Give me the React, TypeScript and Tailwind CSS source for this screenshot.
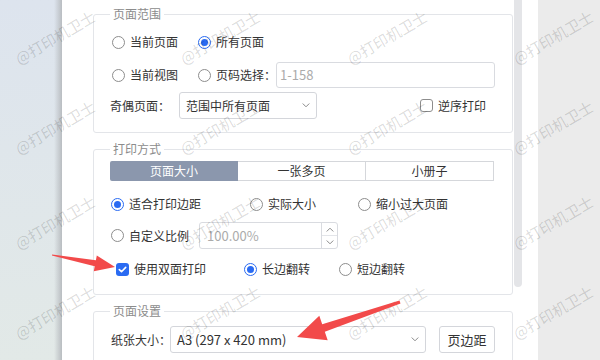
import type { ReactNode } from 'react';

function Radio({ checked, label }: { checked?: boolean; label: string }) {
  return (
    <span className="flex items-center gap-[5px] whitespace-nowrap">
      <span
        className={`flex h-[13px] w-[13px] shrink-0 items-center justify-center rounded-full border bg-white ${
          checked ? 'border-[#2a6bf2]' : 'border-[#8d8d8d]'
        }`}
      >
        {checked && <span className="h-[7px] w-[7px] rounded-full bg-[#2a6bf2]" />}
      </span>
      <span>{label}</span>
    </span>
  );
}

function Checkbox({ checked, label }: { checked?: boolean; label: string }) {
  return (
    <span className="flex items-center gap-[5px] whitespace-nowrap">
      {checked ? (
        <span className="flex h-[13px] w-[13px] shrink-0 items-center justify-center rounded-[3px] bg-[#2a6bf2]">
          <svg width="11" height="11" viewBox="0 0 11 11" fill="none">
            <path d="M2.3 5.6l2.2 2.1 4.2-4.3" stroke="#fff" strokeWidth="1.6" strokeLinecap="round" strokeLinejoin="round" />
          </svg>
        </span>
      ) : (
        <span className="h-[13px] w-[13px] shrink-0 rounded-[3px] border border-[#8d8d8d] bg-white" />
      )}
      <span>{label}</span>
    </span>
  );
}

function Chevron({ up }: { up?: boolean }) {
  return (
    <svg width="8" height="5" viewBox="0 0 8 5" fill="none">
      <path d={up ? 'M1 4.2L4 1.2l3 3' : 'M1 0.8l3 3 3-3'} stroke="#8a8a8a" strokeWidth="1" strokeLinecap="round" strokeLinejoin="round" />
    </svg>
  );
}

function Group({ title, children, last }: { title: string; children: ReactNode; last?: boolean }) {
  return (
    <fieldset
      className={`rounded-[3px] border border-[#e3e5e9] pl-[16px] pr-[17px] ${last ? 'pb-[30px]' : 'pb-[13px]'}`}
    >
      <legend className="px-[3px] text-[12px] leading-[16px] text-[#8c8c8c]">{title}</legend>
      {children}
    </fieldset>
  );
}

// watermark grid: "@打印机卫士"
const wmCols = [55, 220, 387, 553];
const wmRows = [37, 127, 222, 312];

export default function App() {
  return (
    <div className="relative flex h-[360px] w-[600px] overflow-hidden bg-white font-['Noto_Sans_CJK_SC','Noto_Sans',sans-serif] text-[12px] text-[#333]">
      {/* left backdrop */}
      <div className="flex h-full w-[62px] justify-end bg-linear-to-b from-[#dde4ee] to-[#e2e9e7]">
        <div className="h-full w-[8px] bg-linear-to-r from-transparent to-[#b9bdc1]" />
      </div>

      {/* dialog panel */}
      <div className="flex h-full w-[476px] bg-white pl-[31px]">
        <div className="flex w-[420px] flex-col gap-[8px] pt-[6px]">
          <Group title="页面范围">
            <div className="flex flex-col pt-[8px]">
              <div className="flex h-[24px] items-center">
                <div className="w-[86px] pl-[2px]">
                  <Radio label="当前页面" />
                </div>
                <div className="pl-[2px]">
                  <Radio checked label="所有页面" />
                </div>
              </div>
              <div className="mt-[8px] flex h-[26px] items-center">
                <div className="w-[86px] pl-[2px]">
                  <Radio label="当前视图" />
                </div>
                <div className="pl-[2px]">
                  <Radio label="页码选择：" />
                </div>
                <div className="flex h-full flex-1 items-center rounded-[3px] border border-[#d9dbe0] pl-[3px] text-[13px] text-[#ababab]">
                  1-158
                </div>
              </div>
              <div className="mt-[4px] flex h-[27px] items-center">
                <span className="w-[69px] shrink-0 whitespace-nowrap">奇偶页面：</span>
                <div className="flex h-full w-[138px] items-center justify-between rounded-[3px] border border-[#d4d6db] px-[6px]">
                  <span>范围中所有页面</span>
                  <Chevron />
                </div>
                <div className="ml-[103px]">
                  <Checkbox label="逆序打印" />
                </div>
              </div>
            </div>
          </Group>

          <Group title="打印方式">
            <div className="flex flex-col">
              <div className="mt-[4px] flex h-[20px] overflow-hidden rounded-[2px]">
                <div className="flex w-[128px] items-center justify-center bg-[#8b97ad] text-white">页面大小</div>
                <div className="flex w-[128px] items-center justify-center border-y border-r border-[#d5d7db]">一张多页</div>
                <div className="flex w-[128px] items-center justify-center border-y border-r border-[#d5d7db]">小册子</div>
              </div>
              <div className="mt-[11px] flex h-[24px] items-center">
                <div className="w-[140px] pl-[1px]">
                  <Radio checked label="适合打印边距" />
                </div>
                <div className="w-[108px]">
                  <Radio label="实际大小" />
                </div>
                <Radio label="缩小过大页面" />
              </div>
              <div className="mt-[6px] flex h-[27px] items-center">
                <div className="w-[89px] shrink-0 pl-[1px]">
                  <Radio label="自定义比例" />
                </div>
                <div className="flex h-full w-[139px] rounded-[3px] border border-[#d9dbe0]">
                  <div className="flex flex-1 items-center pl-[7px] text-[13px] text-[#ababab]">100.00%</div>
                  <div className="flex w-[16px] flex-col border-l border-[#d9dbe0]">
                    <div className="flex flex-1 items-center justify-center border-b border-[#e3e5e9]">
                      <Chevron up />
                    </div>
                    <div className="flex flex-1 items-center justify-center">
                      <Chevron />
                    </div>
                  </div>
                </div>
              </div>
              <div className="mt-[8px] flex h-[24px] items-center">
                <div className="w-[134px] pl-[6px]">
                  <Checkbox checked label="使用双面打印" />
                </div>
                <div className="w-[95px]">
                  <Radio checked label="长边翻转" />
                </div>
                <Radio label="短边翻转" />
              </div>
            </div>
          </Group>

          <Group title="页面设置" last>
            <div className="mt-[7px] flex h-[27px] items-center">
              <span className="w-[60px] shrink-0 whitespace-nowrap pl-[1px]">纸张大小：</span>
              <div className="flex h-full w-[256px] items-center justify-between rounded-[3px] border border-[#d4d6db] px-[6px]">
                <span className="text-[13px]">A3 (297 x 420 mm)</span>
                <Chevron />
              </div>
              <div className="ml-[13px] flex h-full w-[56px] items-center justify-center rounded-[3px] border border-[#d4d6db] text-[13px]">
                页边距
              </div>
            </div>
          </Group>
        </div>

        {/* scrollbar thumb */}
        <div className="ml-[1px] h-[287px] w-[8px] rounded-b-full bg-[#e4e5e8]" />
      </div>

      {/* right backdrop */}
      <div className="h-full flex-1 bg-[#ebebeb]" />

      {/* watermarks */}
      <div className="pointer-events-none absolute inset-0">
        {wmRows.map((y) =>
          wmCols.map((x) => (
            <span
              key={`${x}-${y}`}
              className="absolute -translate-x-1/2 -translate-y-1/2 -rotate-30 whitespace-nowrap text-[15px] leading-none text-black/15"
              style={{ left: x, top: y }}
            >
              @打印机卫士
            </span>
          ))
        )}
      </div>

      {/* annotation arrows */}
      <svg className="pointer-events-none absolute inset-0" width="600" height="360" viewBox="0 0 600 360">
        <polygon
          points="52.1,254.4 95.9,260.3 96.8,255.4 115,267 93.8,271.2 94.7,266.3 51.9,255.6"
          fill="#f24a4a"
        />
        <polygon
          points="400.5,303.6 324.8,331.8 327.7,340.3 297,337 319.3,315.7 322.2,324.2 399.5,300.4"
          fill="#f24a4a"
        />
      </svg>
    </div>
  );
}
